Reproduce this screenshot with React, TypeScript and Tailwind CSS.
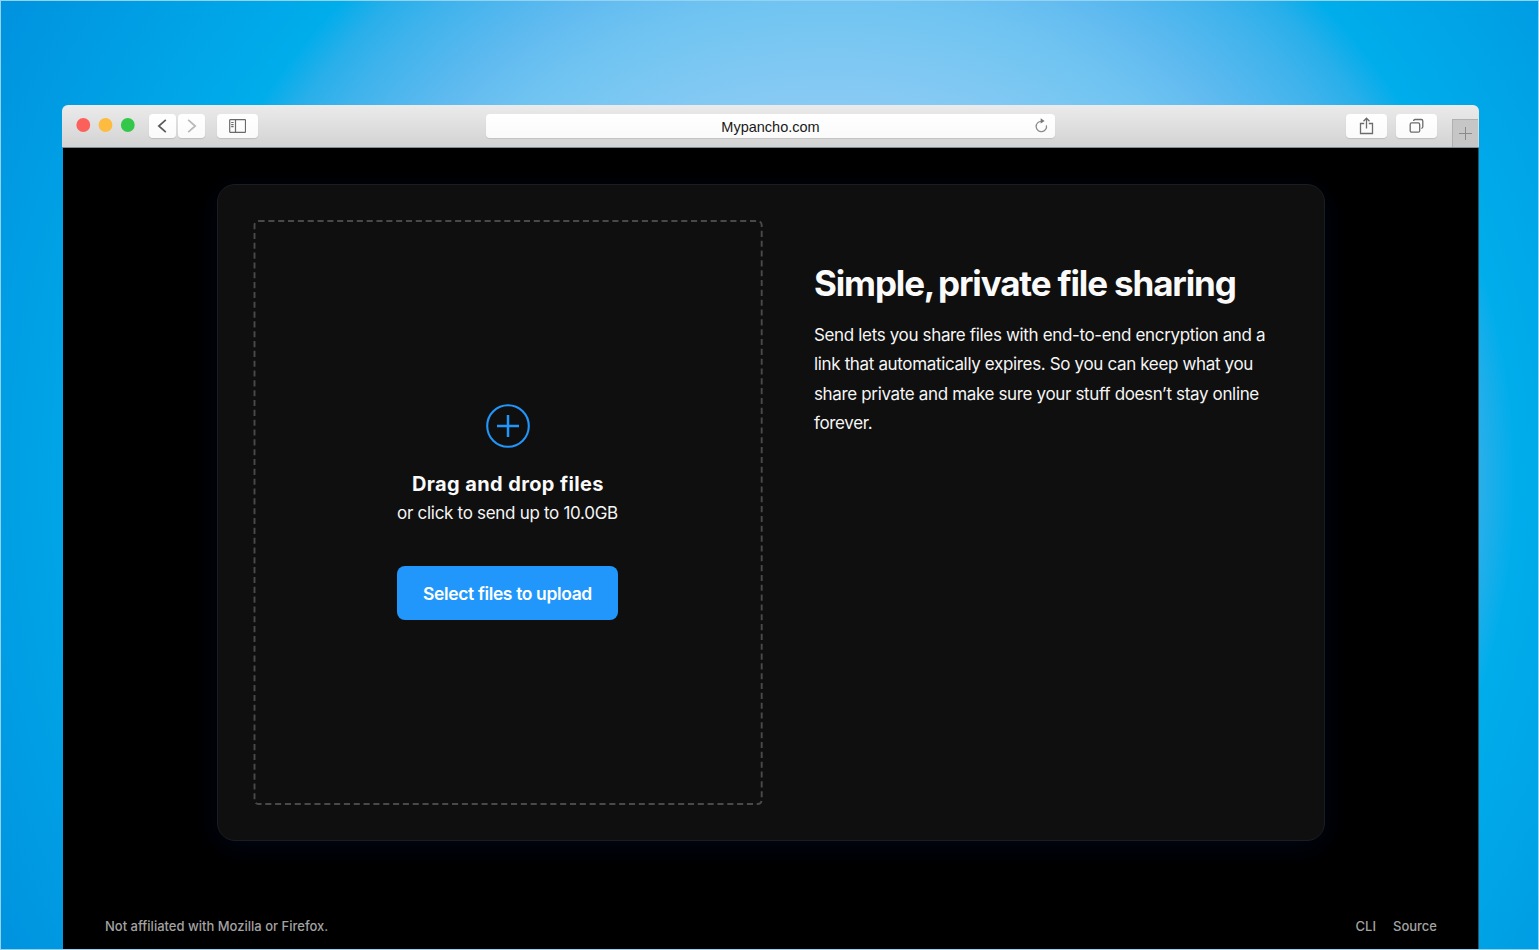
import React from "react";

function ToolButton({ className, children }: { className: string; children: React.ReactNode }) {
  return (
    <button
      className={`flex h-6 items-center justify-center rounded-[4px] bg-linear-to-b from-white to-[#fafafa] shadow-[0_1px_1px_rgba(0,0,0,0.12)] ${className}`}
    >
      {children}
    </button>
  );
}

function TitleBar() {
  return (
    <header className="flex h-[43px] w-[1417px] shrink-0 items-start rounded-t-[6px] border-b border-[#7d8e99] bg-linear-to-b from-[#ebebeb] to-[#d3d3d3] pt-[9px] pl-[14px]">
      <svg className="-mt-px" width="60" height="24" viewBox="0 0 60 24">
        <circle cx="7.300" cy="12" r="6.900" fill="#fc605b" />
        <circle cx="29.500" cy="12" r="6.900" fill="#fdbc40" />
        <circle cx="51.800" cy="12" r="6.900" fill="#34c84a" />
      </svg>
      <div className="ml-[13px] flex gap-[2px]">
        <ToolButton className="w-[27px]">
          <svg width="15" height="16" viewBox="0 0 15 16" fill="none" stroke="#5a5a5a" strokeWidth="1.700">
            <path d="M10.800 1.800 3.800 8l7 6.200" />
          </svg>
        </ToolButton>
        <ToolButton className="w-[27px]">
          <svg width="15" height="16" viewBox="0 0 15 16" fill="none" stroke="#b8b8b8" strokeWidth="1.700">
            <path d="M4.200 1.800 11.200 8l-7 6.200" />
          </svg>
        </ToolButton>
      </div>
      <ToolButton className="ml-3 w-[41px]">
        <svg width="17" height="14" viewBox="0 0 17 14" fill="none" stroke="#6a6a6a" strokeWidth="1.200">
          <rect x="0.700" y="0.700" width="15.800" height="12.600" rx="0.500" />
          <path d="M6.500 .7v12.600M2.200 3.500h2.400M2.200 5.600h2.400M2.200 7.700h2.400" />
        </svg>
      </ToolButton>
      <div className="ml-[228px] flex h-6 w-[569px] items-center justify-between rounded-[4px] bg-linear-to-b from-white to-[#fafafa] pr-[6px] pl-[22px] shadow-[0_1px_1px_rgba(0,0,0,0.1)]">
        <span className="flex-1 pt-px text-center font-['Liberation_Sans',sans-serif] text-[14.500px] leading-5 text-[#1a1a1a]">
          Mypancho.com
        </span>
        <svg width="16" height="18" viewBox="0 0 16 18" fill="none">
          <path d="M8.500 4.300A5.200 5.200 0 1 0 13.400 8.300" stroke="#8c8c8c" strokeWidth="1.300" />
          <path d="M7.700 1.200 11.600 3.900 7.700 6.500Z" fill="#777" />
        </svg>
      </div>
      <ToolButton className="ml-[291px] w-[41px]">
        <svg width="15" height="18" viewBox="0 0 15 18" fill="none" stroke="#6c6c6c" strokeWidth="1.300">
          <path d="M5.200 6.500H1.500v10h12v-10H9.800M7.500 11.500V1.500M4.500 4.200 7.500 1.200l3 3" />
        </svg>
      </ToolButton>
      <ToolButton className="ml-[9px] w-[41px]">
        <svg width="16" height="16" viewBox="0 0 16 16" fill="none" stroke="#6c6c6c" strokeWidth="1.300">
          <rect x="1.200" y="4.900" width="9.500" height="9.300" rx="1.500" />
          <path d="M4.600 2.900C4.600 2 5.100 1.500 6 1.500h6.300c1 0 1.500.5 1.500 1.500v5.800c0 1-.5 1.500-1.500 1.500" />
        </svg>
      </ToolButton>
      <div className="mt-[5px] ml-[15px] flex h-7 w-[26px] items-center justify-center border-t border-l border-[#b0b0b0] bg-[#c6c6c6]">
        <svg width="13" height="13" viewBox="0 0 13 13" stroke="#8a8a8a" strokeWidth="1">
          <path d="M6.500 0v13M0 6.500h13" />
        </svg>
      </div>
    </header>
  );
}

function DropZone() {
  return (
    <div className="relative flex h-[586px] w-[510px] flex-col items-center pt-[185px]">
      <svg className="absolute inset-0" width="510" height="586" fill="none">
        <rect x="1.500" y="2" width="507.200" height="583" rx="4" stroke="#49494c" strokeWidth="1.900" strokeDasharray="6.100 3.730" />
      </svg>
      <svg width="44" height="44" viewBox="0 0 44 44" fill="none" stroke="#2196fb">
        <circle cx="22" cy="22" r="20.800" strokeWidth="2.100" />
        <path d="M22 11v22M11 22h22" strokeWidth="2.500" />
      </svg>
      <h2 className="mt-[21px] text-[20px] leading-[30px] font-bold tracking-[0.380px] text-[#fafafa]">Drag and drop files</h2>
      <p className="mr-px text-[17px] leading-[29px] tracking-[-0.300px]">or click to send up to 10.0GB</p>
      <button className="mt-[38px] mr-px h-[54px] w-[221px] rounded-lg bg-[#2297fb] pt-[2px] text-[17.500px] font-semibold tracking-[-0.370px] text-white">
        Select files to upload
      </button>
    </div>
  );
}

export default function App() {
  return (
    <div className="flex h-[950px] w-[1539px] flex-col border border-[#93d2f1] bg-[radial-gradient(circle_at_830px_478px,#a4d6f6_0px,#86caf4_384px,#70c4f1_480px,#62bbf0_532px,#40b3ec_610px,#28afea_649px,#00adeb_684px,#0091de_970px)] pt-[104px] pl-[61px] font-[Inter,sans-serif] text-[#f5f5f5]">
      <div className="flex h-[844px] w-[1417px] flex-col">
        <TitleBar />
        <main className="ml-px flex min-h-0 flex-1 flex-col border-r border-[#245468] bg-black pt-9 pl-[154px]">
          <section className="flex h-[657px] w-[1108px] rounded-[18px] border border-[#1c1d20] bg-[#0f0f0f] pt-[34px] pl-[35px] shadow-[0_6px_28px_rgba(10,30,110,0.2)]">
            <DropZone />
            <div className="ml-[51px] pt-[42px]">
              <h1 className="text-[35px] leading-[44px] font-bold tracking-[-1.150px] text-[#fafafa]">
                Simple,<span className="-ml-[3.500px]"> private file sharing</span>
              </h1>
              <p className="mt-[15.500px] text-[17px] leading-[29.500px] tracking-[-0.350px] whitespace-nowrap">
                Send lets you share files with end-to-end encryption and a
                <br />
                link that automatically expires. So you can keep what you
                <br />
                share private and make sure your stuff doesn’t stay online
                <br />
                forever.
              </p>
            </div>
          </section>
          <footer className="mt-[75px] -ml-[112px] flex w-[1332px] justify-between text-[13px] leading-5 font-medium text-[#a3a3a3]">
            <span>Not affiliated with Mozilla or Firefox.</span>
            <nav className="flex gap-[17px]">
              <a>CLI</a>
              <a>Source</a>
            </nav>
          </footer>
        </main>
      </div>
    </div>
  );
}
